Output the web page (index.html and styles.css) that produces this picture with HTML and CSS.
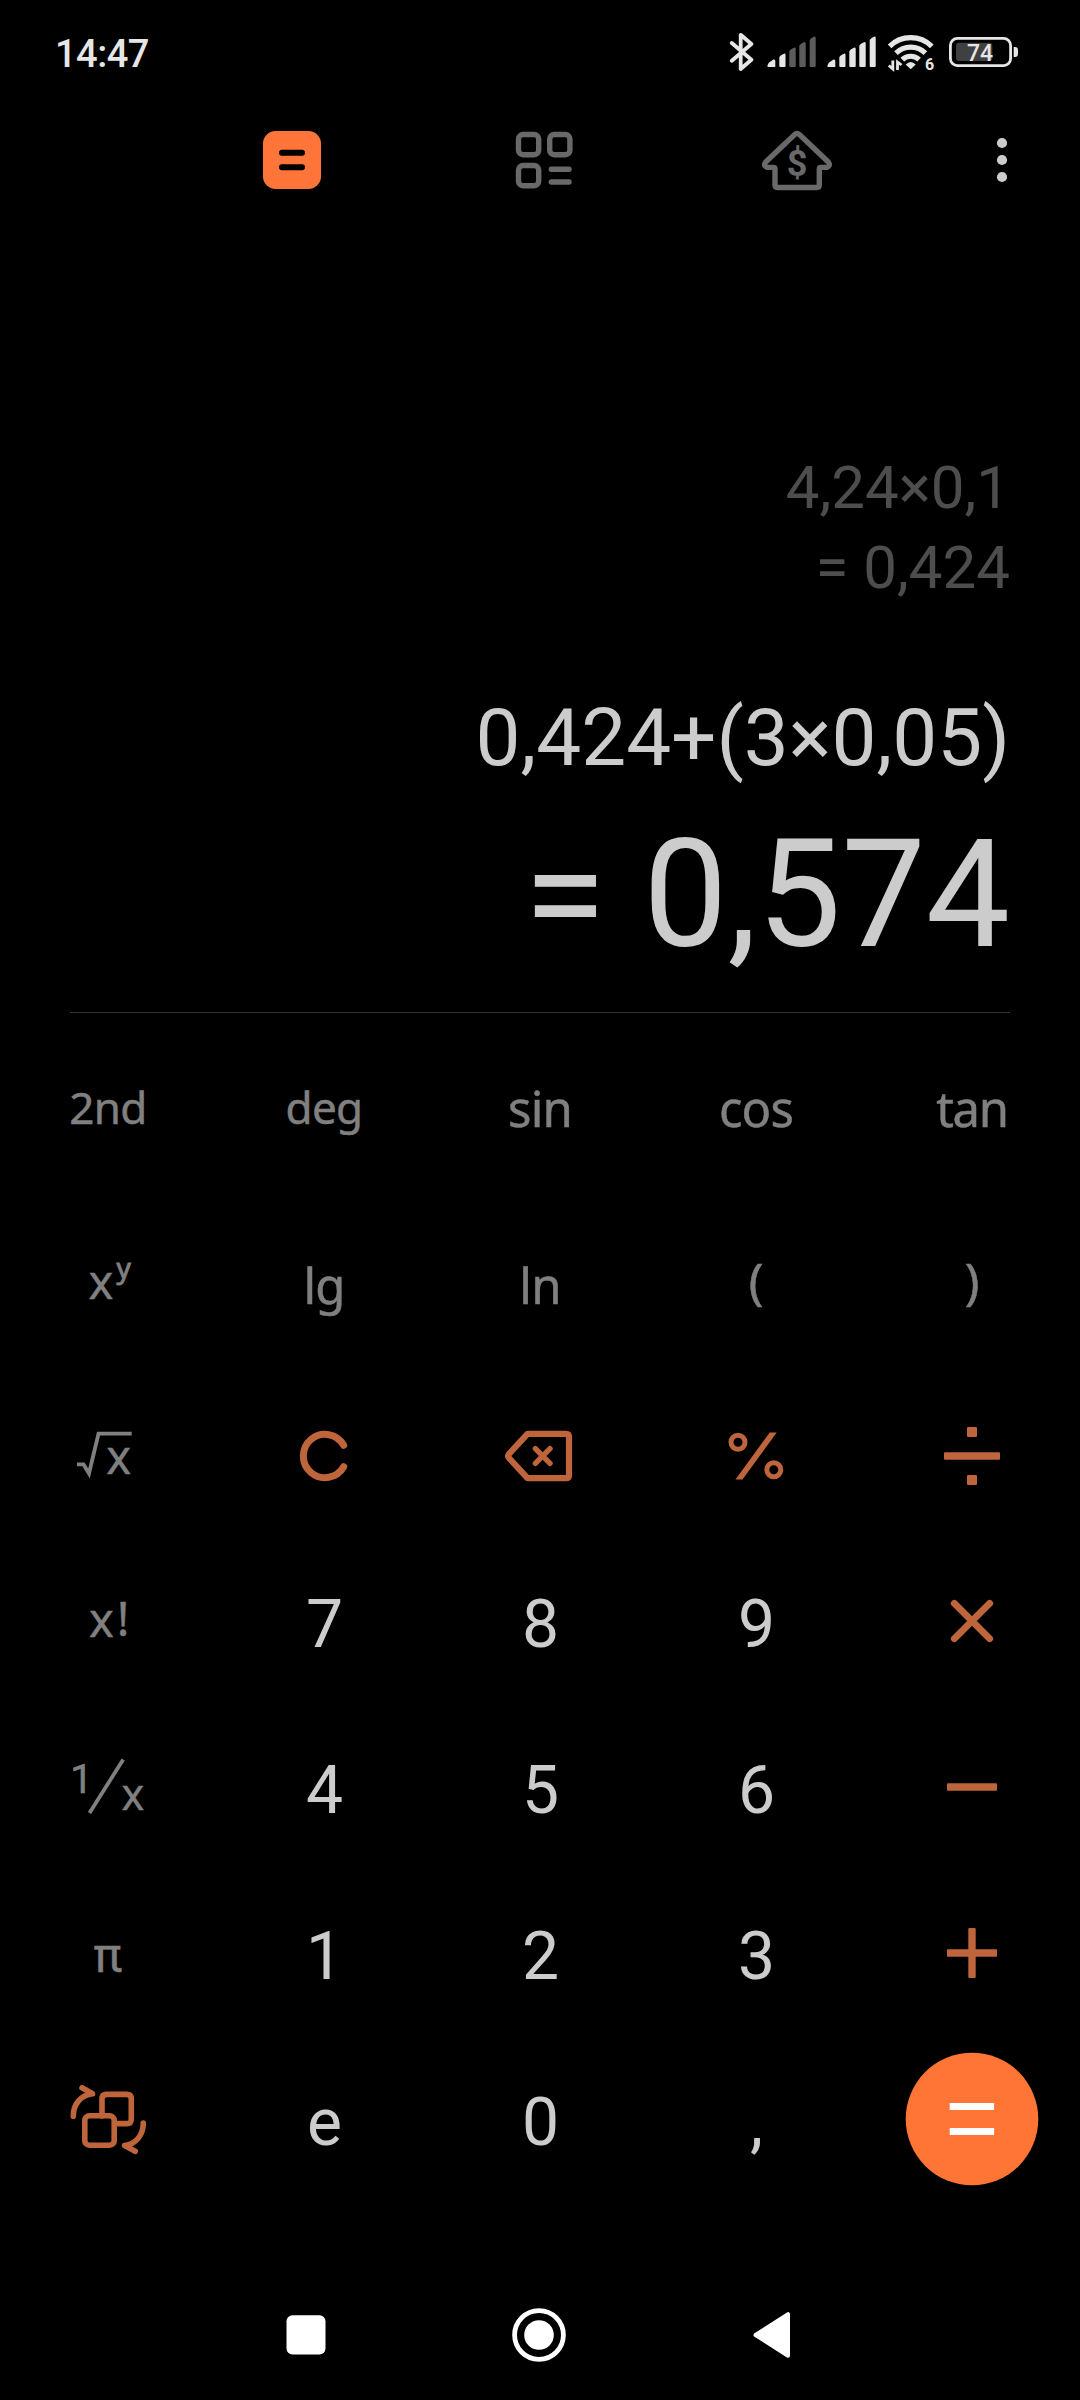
FILE: index.html
```html
<!DOCTYPE html>
<html lang="en">
<head>
<meta charset="utf-8">
<title>Calculator</title>
<link rel="stylesheet" href="styles.css">
</head>
<body>
<header class="status">
  <span class="clock">14:47</span>
  <div class="status-icons">
    <svg class="bluetooth" width="26" height="44" viewBox="728 30 26 44"><path d="M731.8 43 751.4 59.8 740.7 69V34.8L751.4 44 731.8 60.8"/></svg>
    <svg class="signal" width="50" height="34" viewBox="0 0 50 34">
      <path d="M1.3 28.5Q1.5 27.5 6.500 24.500 8.300 24 8.300 26V31.500Q8.300 32 7.800 32H1.300Q.3 32 .3 31ZM12.300 22.500Q12.300 21 17 18.800 18.500 18 18.500 20V31Q18.500 32 17.500 32H13.300Q12.300 32 12.300 31Z"/>
      <path class="off" d="M22.300 16.500Q22.300 15 27 12.800 28.700 12 28.700 14V31Q28.700 32 27.700 32H23.300Q22.300 32 22.300 31ZM32.300 11Q32.300 9.500 37 7.200 38.700 6.500 38.700 8.500V31Q38.700 32 37.700 32H33.300Q32.300 32 32.300 31ZM42.700 5.500Q42.700 4 47 1.700 48.700 1 48.700 3V31Q48.700 32 47.700 32H43.700Q42.700 32 42.700 31Z"/>
    </svg>
    <svg class="signal second" width="50" height="34" viewBox="0 0 50 34">
      <path d="M1.3 28.5Q1.5 27.5 6.500 24.500 8.300 24 8.300 26V31.500Q8.300 32 7.800 32H1.300Q.3 32 .3 31ZM12.300 22.500Q12.300 21 17 18.800 18.500 18 18.500 20V31Q18.500 32 17.500 32H13.300Q12.300 32 12.300 31Z"/>
      <path d="M22.300 16.500Q22.300 15 27 12.800 28.700 12 28.700 14V31Q28.700 32 27.700 32H23.300Q22.300 32 22.300 31ZM32.300 11Q32.300 9.500 37 7.200 38.700 6.500 38.700 8.500V31Q38.700 32 37.700 32H33.300Q32.300 32 32.300 31ZM42.700 5.500Q42.700 4 47 1.700 48.700 1 48.700 3V31Q48.700 32 47.700 32H43.700Q42.700 32 42.700 31Z"/>
    </svg>
    <svg class="wifi" width="50" height="40" viewBox="886 33 50 40">
      <g class="waves"><path d="M889.600 46.300A30 30 0 0 1 931.800 46.300"/><path d="M896 53.200A21 21 0 0 1 925.400 53.200"/><path d="M902.300 59.700A12 12 0 0 1 919.100 59.700"/></g>
      <path d="M910.700 69.300 905.700 64.500Q910.700 59.500 915.700 64.500Z"/>
      <path class="traffic" d="M892.800 60.500V69L888.800 65.500M897.500 70V62L901.500 65"/>
      <text class="wifi-gen" x="925" y="70.300">6</text>
    </svg>
    <svg class="battery" width="72" height="34" viewBox="948 35 72 34">
      <rect class="shell" x="950.400" y="38.400" width="60.200" height="27.200" rx="7"/>
      <rect class="level" x="956" y="42.700" width="36.300" height="18.400" rx="3"/>
      <path d="M1013.700 47H1015Q1018 47 1018 50V54Q1018 57 1015 57H1013.700Z"/>
      <text class="battery-text" x="967" y="60.700">74</text>
    </svg>
  </div>
</header>

<nav class="toolbar">
  <div class="tab">
    <svg width="80" height="80" viewBox="-40 -40 80 80"><rect class="accent" x="-29" y="-29" width="58" height="58" rx="12.500"/><path class="cut" d="M-10 -7.300H10M-10 7.300H10"/></svg>
  </div>
  <div class="tab">
    <svg class="outline" width="80" height="80" viewBox="-40 -40 80 80"><rect x="-26.500" y="-25.500" width="20.200" height="20.200" rx="4.500"/><rect x="4.700" y="-25.500" width="20.200" height="20.200" rx="4.500"/><rect x="-26.500" y="5.500" width="20.200" height="20.200" rx="4.500"/><path d="M6.300 9.300H24M6.300 22H24"/></svg>
  </div>
  <div class="tab">
    <svg class="outline" width="80" height="80" viewBox="757 120 80 80"><path d="M794.600 134.600Q797 132.400 799.400 134.600L828.300 162Q831 165.600 827 167.400H821Q819.300 167.400 819.300 169V185Q819.300 187.500 816.800 187.500H777.500Q775 187.500 775 185V169Q775 167.400 773.300 167.400H767Q763 165.600 765.700 162Z"/><text class="dollar" x="797" y="176">$</text></svg>
  </div>
  <svg class="more" width="20" height="60" viewBox="0 0 20 60"><circle cx="10" cy="13" r="5.100"/><circle cx="10" cy="30" r="5.100"/><circle cx="10" cy="47" r="5.100"/></svg>
</nav>

<main class="display">
  <div class="history">4,24×0,1</div>
  <div class="history">= 0,424</div>
  <div class="expression">0,424+(3×0,05)</div>
  <div class="result">= 0,574</div>
</main>

<section class="keys">
  <div class="key fn small">2nd</div>
  <div class="key fn small">deg</div>
  <div class="key fn">sin</div>
  <div class="key fn">cos</div>
  <div class="key fn tan">tan</div>

  <div class="key"><svg class="math" width="120" height="120" viewBox="-60 -60 120 120"><text x="-19.500" y="14.700">x</text><text class="sup" x="8.500" y="-6.500">y</text></svg></div>
  <div class="key fn low">lg</div>
  <div class="key fn low">ln</div>
  <div class="key fn paren">(</div>
  <div class="key fn paren">)</div>

  <div class="key"><svg class="math" width="120" height="120" viewBox="-60 -60 120 120"><path d="M-31 9.300H-24.500L-19 18.500-9.500-21.300H23.700"/><text x="-1.800" y="19">x</text></svg></div>
  <div class="key"><svg class="op" width="120" height="120" viewBox="-60 -60 120 120"><path class="clear" d="M19.700 -9.700A21.600 21.600 0 1 0 19.700 11.700"/></svg></div>
  <div class="key"><svg class="op" width="120" height="120" viewBox="-60 -60 120 120"><path class="line" d="M-12.500 -21.200H26Q29 -21.200 29 -18.200V20.200Q29 23.200 26 23.200H-12.500L-31 3Q-32.800 1-31 -1Z"/><path class="thin" d="M-4.600 -6.300 10 8.300M10 -6.300-4.600 8.300"/></svg></div>
  <div class="key"><svg class="op" width="120" height="120" viewBox="-60 -60 120 120"><circle class="ring" cx="-18" cy="-12.700" r="7"/><circle class="ring" cx="17.800" cy="14.800" r="7"/><path class="solid" d="M-20.500 24.500H-13.500L20.700-22.500H13.700Z"/></svg></div>
  <div class="key"><svg class="op" width="120" height="120" viewBox="-60 -60 120 120"><rect class="solid" x="-28" y="-2.700" width="56" height="7.400" rx="1"/><rect class="solid" x="-5" y="-28" width="10" height="10" rx="1"/><rect class="solid" x="-5" y="20" width="10" height="10" rx="1"/></svg></div>

  <div class="key"><svg class="math" width="120" height="120" viewBox="-60 -60 120 120"><text x="-19" y="15.700">x</text><text x="8.800" y="15.200">!</text></svg></div>
  <div class="key num">7</div>
  <div class="key num">8</div>
  <div class="key num">9</div>
  <div class="key"><svg class="op" width="120" height="120" viewBox="-60 -60 120 120"><path class="cross" d="M-17.600 -17.600 17.600 17.600M17.600 -17.600-17.600 17.600"/></svg></div>

  <div class="key"><svg class="math" width="120" height="120" viewBox="-60 -60 120 120"><text class="one" x="-38" y="5.700">1</text><path d="M-18.500 26 15.200-27.500"/><text class="denominator" x="13.500" y="22.700">x</text></svg></div>
  <div class="key num">4</div>
  <div class="key num">5</div>
  <div class="key num">6</div>
  <div class="key"><svg class="op" width="120" height="120" viewBox="-60 -60 120 120"><rect class="solid" x="-25" y="-3.700" width="50" height="7.400" rx="1"/></svg></div>

  <div class="key"><svg class="math" width="120" height="120" viewBox="-60 -60 120 120"><text class="pi" x="-14.500" y="18.500">π</text></svg></div>
  <div class="key num">1</div>
  <div class="key num">2</div>
  <div class="key num">3</div>
  <div class="key"><svg class="op" width="120" height="120" viewBox="-60 -60 120 120"><rect class="solid" x="-25" y="-3.700" width="50" height="7.400" rx="1"/><rect class="solid" x="-3.700" y="-25" width="7.400" height="50" rx="1"/></svg></div>

  <div class="key"><svg class="op swap" width="120" height="120" viewBox="-60 -60 120 120"><rect x="-23.200" y="-3.200" width="29.400" height="29.400" rx="4.500"/><path d="M-6 -3V-20Q-6 -24.600-1.500 -24.600H18.800Q23.300 -24.600 23.300 -20V0Q23.300 4.600 18.800 4.600H7"/><path d="M-34.700 -2.800C-34.700 -15-27-23.800-15.500 -25.200L-26 -31.200"/><path d="M35.300 4C35.300 16 28 25 16.600 26.600L27.200 32.300"/></svg></div>
  <div class="key num">e</div>
  <div class="key num">0</div>
  <div class="key num">,</div>
  <div class="key"><svg class="equals" width="134" height="134" viewBox="-67 -67 134 134"><circle cx="0" cy="0" r="66.300"/><rect x="-22.300" y="-16" width="44.400" height="7"/><rect x="-22.300" y="9" width="44.400" height="7"/></svg></div>
</section>

<footer class="system-nav">
  <svg width="60" height="60" viewBox="-30 -30 60 60"><rect x="-19.500" y="-19.700" width="39" height="39.200" rx="6"/></svg>
  <svg width="60" height="60" viewBox="-30 -30 60 60"><circle class="home-ring" r="24.400"/><circle r="14.800"/></svg>
  <svg width="60" height="60" viewBox="-30 -30 60 60"><path class="back" d="M-15.500 0 17-20.800V20.800Z"/></svg>
</footer>
</body>
</html>
```
FILE: styles.css
```css
* { box-sizing: border-box; }

body {
  margin: 0;
  width: 1080px;
  height: 2400px;
  display: flex;
  flex-direction: column;
  background: #000;
  color: #ccc;
  font-family: Roboto, sans-serif;
  overflow: hidden;
}

body > * { flex: none; }

svg { display: block; flex: none; }

/* Status bar */
.status {
  height: 104px;
  padding: 0 60px 0 55px;
  display: flex;
  align-items: center;
  justify-content: space-between;
  color: #e6e6e6;
}
.clock {
  font-size: 38px;
  font-weight: 500;
  line-height: 44px;
  letter-spacing: -.5px;
  padding-top: 3px;
}
.status-icons { display: flex; align-items: center; fill: #e6e6e6; }
.bluetooth { fill: none; stroke: #e6e6e6; stroke-width: 3.8; stroke-linecap: round; stroke-linejoin: round; }
.signal { margin-left: 13px; }
.signal.second { margin-left: 10px; }
.signal .off { fill: #5c5c5c; }
.wifi { margin-left: 9px; margin-top: 2px; }
.waves { fill: none; stroke: #e6e6e6; stroke-width: 5.2; }
.traffic { fill: none; stroke: #e6e6e6; stroke-width: 2.8; }
.wifi-gen { font-size: 16px; font-weight: 700; }
.battery { margin-left: 12px; }
.shell { fill: none; stroke: #e6e6e6; stroke-width: 2.8; }
.level { fill: #404040; }
.battery-text { font-size: 23px; font-weight: 500; }

/* Mode tabs */
.toolbar {
  height: 112px;
  padding: 0 68px 0 166px;
  display: flex;
  align-items: center;
}
.tab { width: 252.500px; display: flex; justify-content: center; }
.accent { fill: #ff7439; }
.cut { stroke: #000; stroke-width: 6; stroke-linecap: round; }
.outline { fill: none; stroke: #696969; stroke-width: 5.400; stroke-linecap: round; stroke-linejoin: round; }
.dollar { font-size: 36px; font-weight: 700; text-anchor: middle; fill: #696969; stroke: none; }
.more { margin-left: auto; fill: #ccc; }

/* Calculation display */
.display {
  height: 797px;
  margin: 0 70px;
  border-bottom: 1px solid #333;
  display: flex;
  flex-direction: column;
  justify-content: flex-end;
  text-align: right;
  white-space: nowrap;
}
.history { font-size: 60px; line-height: 80px; color: #4d4d4d; }
.expression { font-size: 80px; line-height: 100px; margin-top: 80px; }
.result { font-size: 150px; line-height: 160px; margin: 27px 0 37px; }

/* Keypad */
.keys {
  margin-top: 7px;
  display: grid;
  grid-template-columns: repeat(5, 216px);
  grid-template-rows: 176px 176px repeat(5, 166px);
}
.key { display: flex; align-items: center; justify-content: center; }
.fn {
  font: 49px/60px "Noto Sans", sans-serif;
  color: #808080;
  letter-spacing: -.8px;
  -webkit-text-stroke: .5px #808080;
}
.fn.small { font-size: 44px; padding-bottom: 3px; letter-spacing: -.7px; }
.fn.tan { letter-spacing: -1.3px; }
.fn.low { padding-top: 2px; }
.fn.paren { padding-bottom: 8px; letter-spacing: 0; }
.num { font-size: 66px; line-height: 80px; padding: 7px 0 0 1px; }

.math { fill: #808080; font: 47px "Noto Sans", sans-serif; }
.math text { stroke: #808080; stroke-width: .4; }
.math path { fill: none; stroke: #808080; stroke-width: 3.800; }
.math .sup { font-size: 28px; stroke-width: .9; }
.math .one { font: 41px Roboto, sans-serif; }
.math .denominator { font-size: 43px; }
.math .pi { font: 48px Roboto, sans-serif; }

.op { fill: none; stroke: #be653b; stroke-linecap: round; stroke-linejoin: round; }
.op .solid { fill: #be653b; stroke: none; }
.clear { stroke-width: 7; }
.line { stroke-width: 6.200; }
.thin { stroke-width: 5.400; }
.ring { stroke-width: 5; }
.cross { stroke-width: 7; }
.swap { stroke-width: 5.600; }
.equals { fill: #ff7535; }
.equals rect { fill: #fff; }

/* System navigation */
.system-nav {
  margin-top: 68px;
  height: 130px;
  padding-left: 190px;
  display: grid;
  grid-template-columns: repeat(3, 232.500px);
  align-items: center;
  justify-items: center;
  fill: #fff;
}
.home-ring { fill: none; stroke: #fff; stroke-width: 4.800; }
.back { stroke: #fff; stroke-width: 4; stroke-linejoin: round; }
```
